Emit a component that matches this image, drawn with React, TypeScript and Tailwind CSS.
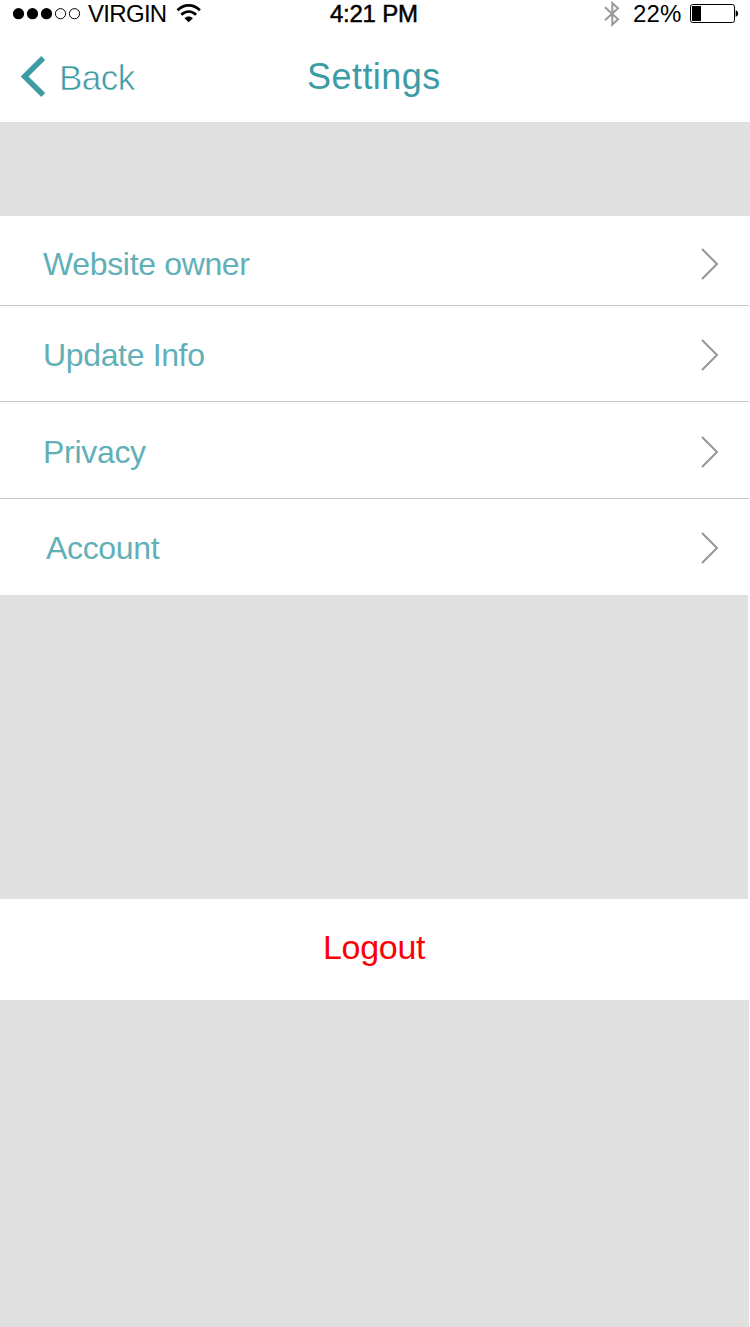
const FONT = "font-['Liberation_Sans',Arial,sans-serif]";

type Row = { label: string; row: string; text: string; chevron: string };

const rows: Row[] = [
  { label: "Website owner", row: "h-[90px] border-b", text: "ml-[43px] mt-[30px] tracking-[-0.34px]", chevron: "mt-[32px]" },
  { label: "Update Info", row: "h-[96px] border-b", text: "ml-[43px] mt-[31px] tracking-[-0.35px]", chevron: "mt-[33px]" },
  { label: "Privacy", row: "h-[97px] border-b", text: "ml-[43px] mt-[32px] tracking-[-0.3px]", chevron: "mt-[34px]" },
  { label: "Account", row: "h-[96px]", text: "ml-[46px] mt-[31px] tracking-[-0.35px]", chevron: "mt-[33px]" },
];

function Signal() {
  return (
    <svg className="ml-[12px] mt-[7px] h-[14px] w-[70px] shrink-0" viewBox="0 0 70 14">
      <circle cx="6.5" cy="6.7" r="5.6" />
      <circle cx="20.5" cy="6.7" r="5.6" />
      <circle cx="34.5" cy="6.7" r="5.6" />
      <circle cx="48.5" cy="6.7" r="5.1" fill="none" stroke="#000" strokeWidth="1" />
      <circle cx="62.5" cy="6.7" r="5.1" fill="none" stroke="#000" strokeWidth="1" />
    </svg>
  );
}

function Wifi() {
  return (
    <svg className="ml-[10px] mt-[3px] h-[20px] w-[26px] shrink-0" viewBox="0 0 26 20">
      <g fill="none" stroke="#000" strokeWidth="2.7">
        <path d="M1.5 7.3C8 .7 17.4.7 23.9 7.3" />
        <path d="M5.3 11.8C9.8 7.5 15.6 7.5 20.1 11.8" />
      </g>
      <path d="M8.5 15.2C11 12.9 14.4 12.9 16.9 15.2L12.7 19.3z" />
    </svg>
  );
}

function Bluetooth() {
  return (
    <svg className="ml-px mt-[1px] h-[26px] w-[16px] shrink-0" viewBox="0 0 16 26" fill="none" stroke="#999" strokeWidth="2">
      <path d="M1 6.3L14 18.3L8.3 23.7V2L14 7.3L1 19.3" />
    </svg>
  );
}

function Battery() {
  return (
    <svg className="ml-[8px] mt-[3px] h-[21px] w-[50px] shrink-0" viewBox="0 0 50 21">
      <rect x="1.5" y="1.5" width="44" height="18" rx="2.2" fill="none" stroke="#000" strokeWidth="1" />
      <rect x="3" y="3" width="9" height="15" />
      <path d="M46.7 7.3C50 8 50 13 46.7 13.7z" />
    </svg>
  );
}

function Chevron({ className }: { className: string }) {
  return (
    <svg className={`mr-[30px] h-[32px] w-[18px] shrink-0 ${className}`} viewBox="0 0 18 32" fill="none" stroke="#969696" strokeWidth="2">
      <path d="M1 1L16 16L1 31" />
    </svg>
  );
}

export default function App() {
  return (
    <div className={`flex h-[1327px] w-[750px] flex-col overflow-hidden bg-white text-black ${FONT}`}>
      <header className="h-[122px] shrink-0">
        <div className="grid h-[28px] grid-cols-[330px_1fr_147px] text-[24px] leading-[28px]">
          <div className="flex">
            <Signal />
            <span className="ml-[6px] tracking-[-0.7px]">VIRGIN</span>
            <Wifi />
          </div>
          <span className="whitespace-nowrap tracking-[-0.25px] [-webkit-text-stroke:0.5px_black]">4:21 PM</span>
          <div className="flex">
            <Bluetooth />
            <span className="ml-[13px] tracking-[0.1px]">22%</span>
            <Battery />
          </div>
        </div>
        <div className="grid h-[94px] grid-cols-[307px_1fr] text-[#3c9ba5]">
          <div className="flex">
            <svg className="ml-[20px] mt-[27px] h-[43px] w-[27px] shrink-0" viewBox="0 0 27 43" fill="none" stroke="currentColor" strokeWidth="5.5">
              <path d="M23.2 3L4.6 21.5L23.2 40" />
            </svg>
            <span className="ml-[12px] mt-[30px] text-[35px] leading-[40px] tracking-[-0.5px] [-webkit-text-stroke:0.6px_white]">Back</span>
          </div>
          <h1 className="mt-[29px] text-[36px] leading-[40px] tracking-[0.45px]">Settings</h1>
        </div>
      </header>
      <div className="h-[94px] shrink-0 bg-[#e0e0e0]" />
      <ul className="flex shrink-0 flex-col">
        {rows.map((r) => (
          <li key={r.label} className={`mr-px flex items-start justify-between border-[#c8c8c8] ${r.row}`}>
            <span className={`whitespace-nowrap text-[32px] leading-[36px] text-[#61b0b7] ${r.text}`}>{r.label}</span>
            <Chevron className={r.chevron} />
          </li>
        ))}
      </ul>
      <div className="mr-[2px] h-[304px] shrink-0 bg-[#e0e0e0]" />
      <button className="flex h-[101px] shrink-0 items-start pl-[323px] pt-[28px] text-[34px] leading-[40px] tracking-[-0.3px] text-[#fb0006]">
        Logout
      </button>
      <div className="mr-px flex-1 bg-[#e0e0e0]" />
    </div>
  );
}
